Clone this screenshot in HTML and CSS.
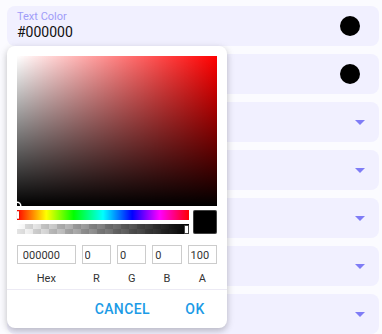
FILE: index.html
```html
<!DOCTYPE html>
<html lang="en">
  <head>
    <meta charset="UTF-8" />
    <title>Theme colors</title>
    <link rel="stylesheet" href="styles.css">
  </head>
  <body>
    <div class="field-list">
      <div class="field">
        <div class="field-text">
          <span class="field-label">Text Color</span>
          <span class="field-value">#000000</span>
        </div>
        <span class="dot"></span>
      </div>
      <div class="field">
        <div class="field-text"></div>
        <span class="dot"></span>
      </div>
      <div class="field select"><span class="caret"></span></div>
      <div class="field select"><span class="caret"></span></div>
      <div class="field select"><span class="caret"></span></div>
      <div class="field select"><span class="caret"></span></div>
      <div class="field select"><span class="caret"></span></div>
    </div>

    <div class="picker-dialog">
      <div class="picker">
        <div class="saturation">
          <span class="sat-pointer"></span>
        </div>
        <div class="sliders-row">
          <div class="sliders">
            <div class="hue"><span class="hue-pointer"></span></div>
            <div class="alpha"><span class="alpha-pointer"></span></div>
          </div>
          <div class="swatch"></div>
        </div>
        <div class="inputs">
          <div class="input-box"><input type="text" value="000000" /><label>Hex</label></div>
          <div class="input-box"><input type="text" value="0" /><label>R</label></div>
          <div class="input-box"><input type="text" value="0" /><label>G</label></div>
          <div class="input-box"><input type="text" value="0" /><label>B</label></div>
          <div class="input-box"><input type="text" value="100" /><label>A</label></div>
        </div>
      </div>
      <div class="dialog-actions">
        <button class="action-btn">Cancel</button>
        <button class="action-btn">OK</button>
      </div>
    </div>
  </body>
</html>
```

FILE: styles.css
```css
body {
  font-family: "Roboto", "Liberation Sans", sans-serif;
  background-color: #fbfbff;
  margin: 0;
  position: relative;
  height: 334px;
  overflow: hidden;
}

.field-list {
  display: flex;
  flex-direction: column;
  gap: 8px;
  padding: 6px 3px 0 7px;
}

.field {
  height: 40px;
  flex-shrink: 0;
  background-color: #f1f0ff;
  border-radius: 8px;
  display: flex;
  align-items: center;
  justify-content: space-between;
  padding: 0 19px 0 10px;
  box-sizing: border-box;
}

.field.select {
  justify-content: flex-end;
  padding-right: 14px;
}

.field-text {
  display: flex;
  flex-direction: column;
}

.field-label {
  font-size: 11px;
  color: #a09cf8;
  line-height: 13px;
  margin-top: -1px;
}

.field-value {
  font-size: 14px;
  color: #111;
  line-height: 18px;
}

.dot {
  width: 20px;
  height: 20px;
  border-radius: 50%;
  background-color: #000;
}

.caret {
  width: 0;
  height: 0;
  border-left: 5px solid transparent;
  border-right: 5px solid transparent;
  border-top: 5px solid #7f7cf6;
}

.picker-dialog {
  position: absolute;
  left: 7px;
  top: 46px;
  width: 220px;
  background-color: #fff;
  border-radius: 8px;
  box-shadow: 0 3px 6px rgba(0, 0, 0, 0.16), 0 2px 10px rgba(0, 0, 0, 0.1);
}

.picker {
  padding: 10px 10px 0 10px;
  border-bottom: 1px solid #eceaf4;
  height: 244px;
  box-sizing: border-box;
}

.saturation {
  position: relative;
  height: 150px;
  background: linear-gradient(to top, #000, rgba(0, 0, 0, 0)),
    linear-gradient(to right, #fff, rgba(255, 255, 255, 0)),
    #f00;
  overflow: hidden;
}

.sat-pointer {
  position: absolute;
  left: -3px;
  bottom: -3px;
  width: 6px;
  height: 6px;
  border-radius: 50%;
  box-shadow: 0 0 0 1.5px #fff, inset 0 0 1px 1px rgba(0, 0, 0, 0.3);
}

.sliders-row {
  display: flex;
  gap: 4px;
  margin-top: 4px;
}

.sliders {
  flex: 1;
  display: flex;
  flex-direction: column;
  gap: 4px;
}

.hue {
  position: relative;
  height: 10px;
  background: linear-gradient(to right, #f00 0%, #ff0 17%, #0f0 33%, #0ff 50%, #00f 67%, #f0f 83%, #f00 100%);
}

.hue-pointer {
  position: absolute;
  left: 0;
  top: 1px;
  width: 2px;
  height: 8px;
  background-color: #fff;
  border-radius: 1px;
  box-shadow: 0 0 1px rgba(0, 0, 0, 0.6);
}

.alpha {
  position: relative;
  height: 10px;
  background: linear-gradient(to right, rgba(0, 0, 0, 0), #000),
    repeating-conic-gradient(#e4e4e4 0% 25%, #fff 0% 50%) 0 0 / 16px 10px;
}

.alpha-pointer {
  position: absolute;
  right: 0;
  top: 1px;
  width: 3px;
  height: 7px;
  background-color: #fff;
  border: 0.5px solid #444;
  border-radius: 1px;
}

.swatch {
  width: 24px;
  height: 24px;
  background-color: #000;
  border-radius: 2px;
  box-shadow: inset 0 0 0 1px rgba(255, 255, 255, 0.25);
}

.inputs {
  display: grid;
  grid-template-columns: 2fr 1fr 1fr 1fr 1fr;
  gap: 6px;
  margin-top: 11px;
}

.input-box {
  display: flex;
  flex-direction: column;
}

.input-box input {
  width: 100%;
  height: 19px;
  box-sizing: border-box;
  border: none;
  box-shadow: inset 0 0 0 1px #ccc;
  padding: 3px 10% 2px;
  font-family: "Roboto", "Liberation Sans", sans-serif;
  font-size: 11px;
  color: #333;
  outline: none;
}

.input-box label {
  text-align: center;
  font-size: 11px;
  color: #333;
  padding-top: 8px;
}

.dialog-actions {
  display: flex;
  justify-content: flex-end;
  align-items: center;
  height: 38px;
}

.action-btn {
  background: none;
  border: none;
  font-family: "Roboto", "Liberation Sans", sans-serif;
  font-size: 14px;
  font-weight: 500;
  letter-spacing: 0.4px;
  text-transform: uppercase;
  color: #1c9be6;
  min-width: 64px;
  padding: 6px 8px;
  cursor: pointer;
}

.action-btn + .action-btn {
  margin-left: 5px;
}
```
